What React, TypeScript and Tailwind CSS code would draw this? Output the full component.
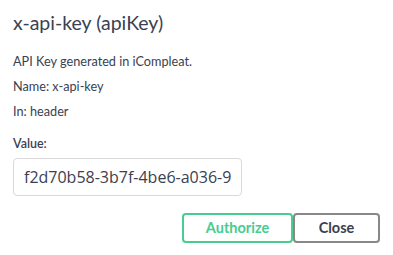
import React from "react";

export default function App() {
  return (
    <div className="w-[393px] h-[255px] bg-white px-[13px] pt-[11px] font-['Lato',sans-serif] text-[#3b4151] overflow-hidden">
      {/* Title */}
      <h4 className="text-[19.5px] leading-[24px]">x-api-key (apiKey)</h4>

      {/* Details */}
      <div className="mt-[18px] flex flex-col gap-[9px] text-[12.7px] leading-[16px]">
        <p>API Key generated in iCompleat.</p>
        <p>Name: x-api-key</p>
        <p>In: header</p>
      </div>

      {/* Value field */}
      <label className="block mt-[17px] text-[12.5px] leading-[16px] font-semibold">Value:</label>
      <input
        readOnly
        value="f2d70b58-3b7f-4be6-a036-9c1e5d8a2b44"
        className="mt-[6px] block w-[229px] h-[38px] px-[10px] border border-[#d9d9d9] rounded-[4px] bg-white text-[16px] font-['Open_Sans',sans-serif] text-[#3b4151] outline-none"
      />

      {/* Actions */}
      <div className="mt-[17px] flex justify-end">
        <button className="w-[111px] h-[30px] border-2 border-[#49cc90] rounded-[4px] text-[14.5px] font-bold text-[#49cc90] bg-white">
          Authorize
        </button>
        <button className="w-[87px] h-[30px] border-2 border-[#888] rounded-[4px] text-[14.5px] font-bold text-[#3b4151] bg-white">
          Close
        </button>
      </div>
    </div>
  );
}
